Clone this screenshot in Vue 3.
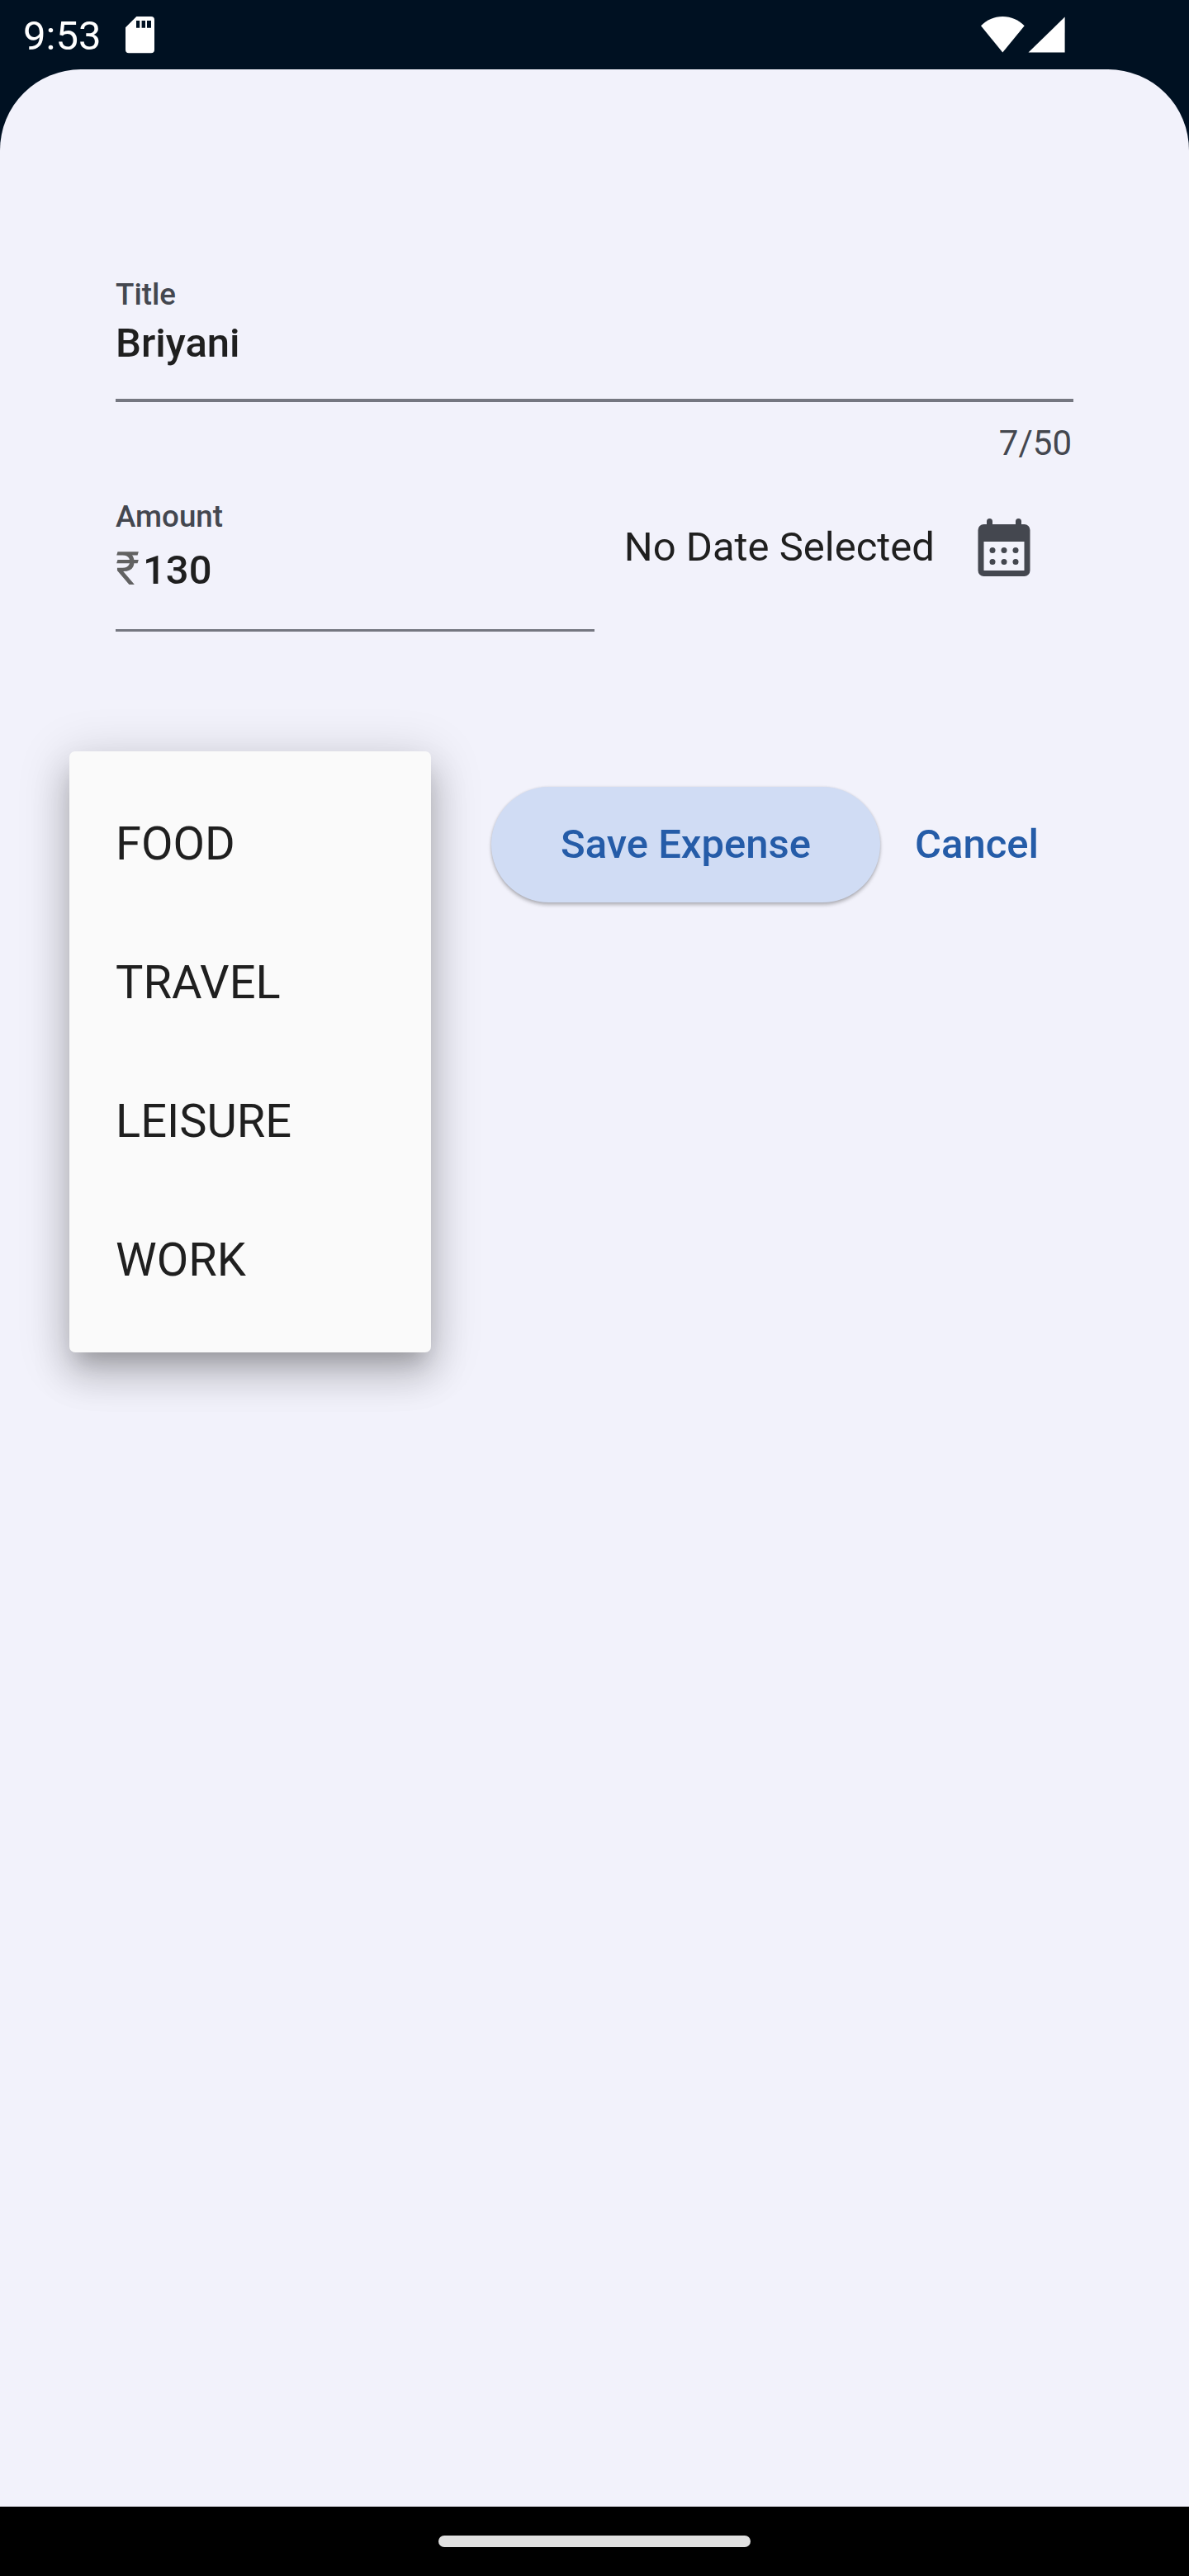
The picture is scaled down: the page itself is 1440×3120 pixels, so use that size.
<script setup>
const categories = ['FOOD', 'TRAVEL', 'LEISURE', 'WORK']
const dots = [8, 12, 16].flatMap((x) => [13, 17].map((y) => ({ x, y })))
</script>

<template>
  <div class="screen">
    <header class="status">
      <span class="time">9:53</span>
      <svg class="sd" width="35" height="44" viewBox="0 0 35 44">
        <path fill="#fff" fill-rule="evenodd" d="M13.3 0H31a4 4 0 0 1 4 4v36.300a4 4 0 0 1-4 4H4a4 4 0 0 1-4-4V13.300zM13 5v8.700h4.200V5zM19.600 5v8.700h4.400V5zM26 5v8.700h5V5z" />
      </svg>
      <svg class="signals" width="104" height="46" viewBox="0 0 104 46">
        <path fill="#fff" d="M0 12.200C7 5 16 1 26.300 1s19.300 4 26.400 11.200L26.300 44.500z" />
        <path fill="#fff" d="M57.500 44.600L101.600 1.500v43.100z" />
      </svg>
    </header>

    <main class="sheet">
      <section class="field">
        <label class="label">Title</label>
        <div class="value">Briyani</div>
        <div class="line"></div>
        <div class="counter">7/50</div>
      </section>

      <section class="row">
        <div class="field amount">
          <label class="label">Amount</label>
          <div class="value"><span class="prefix">₹</span><span>130</span></div>
          <div class="line"></div>
        </div>
        <div class="date">
          <span>No Date Selected</span>
          <button class="pick" aria-label="Pick date">
            <svg width="84" height="84" viewBox="0 0 24 24" fill="#44474f">
              <path fill-rule="evenodd" d="M6 4V3a1 1 0 0 1 2 0v1h8V3a1 1 0 0 1 2 0v1h1a2 2 0 0 1 2 2v14a2 2 0 0 1-2 2H5a2 2 0 0 1-2-2V6a2 2 0 0 1 2-2zM5 10v10h14V10z" />
              <circle v-for="d in dots" :key="`${d.x}-${d.y}`" :cx="d.x" :cy="d.y" r="1" />
            </svg>
          </button>
        </div>
      </section>

      <section class="actions">
        <button class="btn save">Save Expense</button>
        <button class="btn cancel">Cancel</button>
      </section>
    </main>

    <ul class="menu">
      <li v-for="c in categories" :key="c">{{ c }}</li>
    </ul>

    <footer class="nav"><div class="pill"></div></footer>
  </div>
</template>

<style>
body {
  margin: 0;
}
</style>

<style scoped>
.screen {
  position: relative;
  display: flex;
  flex-direction: column;
  width: 1440px;
  height: 3120px;
  background: #001122;
  font-family: Roboto, "Liberation Sans", sans-serif;
  color: #1f1f1f;
}
.status {
  display: flex;
  align-items: flex-start;
  height: 84px;
  box-sizing: border-box;
  padding: 0 149px 0 28px;
  color: #fff;
}
.time {
  width: 124px;
  font-size: 49px;
  line-height: 58px;
  padding-top: 15px;
}
.sd {
  margin-top: 20px;
  overflow: visible;
}
.signals {
  margin: 18.500px -1px 0 auto;
}
.sheet {
  flex: 1;
  box-sizing: border-box;
  padding: 251px 140px 0;
  border-radius: 98px 98px 0 0;
  background: #f2f2fb;
}
.label {
  display: block;
  font-size: 36.750px;
  line-height: 44px;
  font-weight: 500;
  color: #44474f;
}
.value {
  display: flex;
  margin-top: 8px;
  font-size: 49px;
  line-height: 58px;
  font-weight: 500;
}
.prefix {
  width: 33px;
  font-size: 56px;
  line-height: 54px;
  font-weight: 400;
  color: #626262;
}
.line {
  height: 3.500px;
  margin-top: 38px;
  background: #757780;
}
.counter {
  margin-top: 25px;
  padding-right: 2px;
  font-size: 42px;
  line-height: 50px;
  text-align: right;
  color: #44474f;
}
.row {
  display: flex;
  margin-top: 42px;
  height: 162px;
}
.amount {
  width: 580px;
}
.amount .value {
  height: 58px;
  margin-top: 14px;
}
.amount .line {
  margin-top: 42px;
}
.date {
  flex: 1;
  display: flex;
  align-items: center;
  justify-content: flex-end;
  height: 118px;
  font-size: 49px;
  line-height: 58px;
  white-space: nowrap;
}
.pick {
  display: flex;
  justify-content: center;
  width: 168px;
  padding: 0;
  border: 0;
  background: none;
}
.actions {
  display: flex;
  justify-content: flex-end;
  margin-top: 187px;
}
.btn {
  height: 140px;
  padding: 0 42px;
  border: 0;
  border-radius: 70px;
  background: none;
  font: 500 49px/58px Roboto, "Liberation Sans", sans-serif;
  color: #255ca8;
  white-space: nowrap;
}
.save {
  padding: 0 84px;
  background: #d0dcf4;
  box-shadow: 0 3px 4px rgba(0, 0, 0, 0.26), 0 0 3px rgba(0, 0, 0, 0.1);
}
.menu {
  position: absolute;
  left: 84px;
  top: 910px;
  box-sizing: border-box;
  width: 437.500px;
  height: 728px;
  margin: 0;
  padding: 28px 56px;
  list-style: none;
  border-radius: 7px;
  background: #fafafa;
  box-shadow:
    0 17.500px 24px -10.500px rgba(0, 0, 0, 0.2),
    0 28px 44px 3.500px rgba(0, 0, 0, 0.14),
    0 10.500px 60px 7px rgba(0, 0, 0, 0.14);
}
.menu li {
  height: 168px;
  font-size: 56px;
  line-height: 168px;
}
.nav {
  display: flex;
  justify-content: center;
  height: 84px;
  background: #000;
}
.pill {
  width: 378px;
  height: 14px;
  margin-top: 35px;
  border-radius: 7px;
  background: #e0e0e0;
}
</style>
